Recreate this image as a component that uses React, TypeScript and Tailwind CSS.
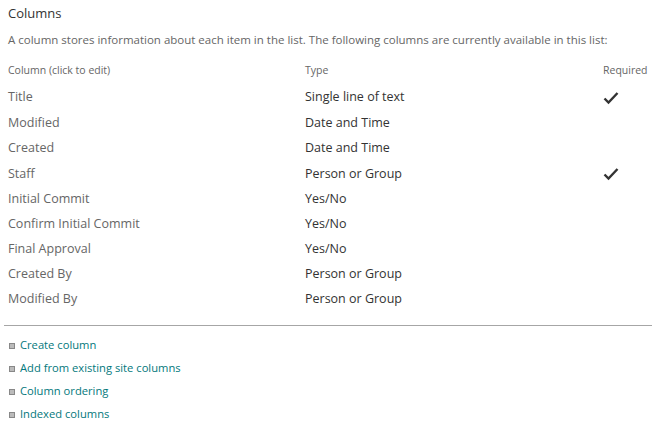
import React from "react";

const rows: { name: string; type: string; required?: boolean; h: string }[] = [
  { name: "Title", type: "Single line of text", required: true, h: "h-[27px]" },
  { name: "Modified", type: "Date and Time", h: "h-[25px]" },
  { name: "Created", type: "Date and Time", h: "h-[25px]" },
  { name: "Staff", type: "Person or Group", required: true, h: "h-[26px]" },
  { name: "Initial Commit", type: "Yes/No", h: "h-[25px]" },
  { name: "Confirm Initial Commit", type: "Yes/No", h: "h-[25px]" },
  { name: "Final Approval", type: "Yes/No", h: "h-[25px]" },
  { name: "Created By", type: "Person or Group", h: "h-[25px]" },
  { name: "Modified By", type: "Person or Group", h: "h-[25px]" },
];

const links = ["Create column", "Add from existing site columns", "Column ordering", "Indexed columns"];

function Check() {
  return (
    <svg width="16" height="14" viewBox="0 0 16 14">
      <path d="M1.5 7.5 L5.5 11.5 L14.5 2" fill="none" stroke="#333" strokeWidth="2.4" />
    </svg>
  );
}

export default function App() {
  return (
    <div className="w-[656px] h-[432px] bg-white overflow-hidden" style={{ fontFamily: '"Open Sans", sans-serif' }}>
      <div className="pl-2 pt-[4px] text-[13px] leading-[18px] text-[#333]">Columns</div>
      <div className="pl-2 mt-[10px] text-[11.5px] leading-[16px] text-[#666]">
        A column stores information about each item in the list. The following columns are currently available in this list:
      </div>
      <div className="grid grid-cols-[297px_298px_1fr] pl-2 mt-[14px] text-[10.5px] leading-[16px] text-[#666]">
        <div>Column (click to edit)</div>
        <div>Type</div>
        <div>Required</div>
      </div>
      <div className="mt-[6px]">
        {rows.map((r) => (
          <div key={r.name} className={`grid grid-cols-[297px_298px_1fr] pl-2 items-center ${r.h}`}>
            <div className="text-[12.5px] text-[#666]">{r.name}</div>
            <div className="text-[12.5px] text-[#333]">{r.type}</div>
            <div>{r.required ? <Check /> : null}</div>
          </div>
        ))}
      </div>
      <div className="mx-1 mt-[13px] border-t border-[#a6a6a6]" />
      <div className="mt-[8px] pl-[9px] flex flex-col">
        {links.map((l) => (
          <div key={l} className="flex items-center h-[23px] gap-[5px]">
            <span className="w-[6px] h-[6px] bg-[#bbb] border border-[#888]" />
            <span className="text-[11.2px] text-[#03787c]">{l}</span>
          </div>
        ))}
      </div>
    </div>
  );
}
